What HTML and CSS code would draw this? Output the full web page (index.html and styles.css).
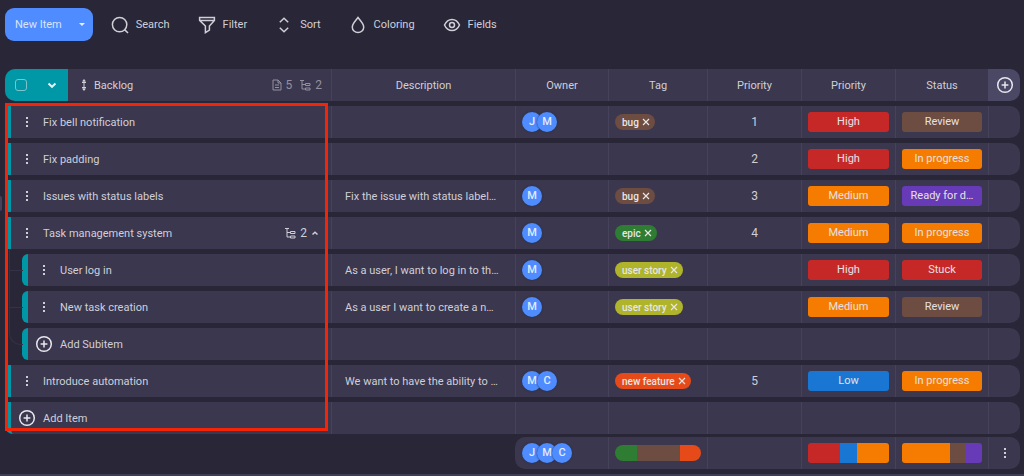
FILE: index.html
```html
<!DOCTYPE html>
<html lang="en">
<head>
<meta charset="utf-8">
<title>Backlog</title>
<link rel="stylesheet" href="styles.css">
</head>
<body>
<svg class="sprite" aria-hidden="true">
  <symbol id="search" viewBox="0 0 18 18"><circle cx="8.6" cy="8.6" r="7.2"/><path d="M13.6 13.6l3.4 3.4"/></symbol>
  <symbol id="filter" viewBox="0 0 18 18"><path d="M1.600 1.600h14.800v2.800l-5 5.600v4.200l-4 2.400V10L1.600 4.400zM2 4.400h14"/></symbol>
  <symbol id="sort" viewBox="0 0 18 18"><path d="M4.800 6.200L9 2.200l4.200 4M4.800 11.800L9 15.800l4.200-4"/></symbol>
  <symbol id="drop" viewBox="0 0 18 18"><path d="M9 1.500C7 4.500 3.300 7.600 3.300 11.200a5.700 5.300 0 0 0 11.400 0C14.700 7.600 11 4.500 9 1.500z"/></symbol>
  <symbol id="eye" viewBox="0 0 18 18"><path d="M1.500 9C3.200 5.200 6 3.400 9 3.400S14.800 5.200 16.500 9c-1.700 3.800-4.500 5.600-7.500 5.600S3.200 12.800 1.500 9z"/><circle cx="9" cy="9" r="2.500"/></symbol>
  <symbol id="plus" viewBox="0 0 18 18"><circle cx="9" cy="9" r="7.300"/><path d="M9 5.600v6.800M5.600 9h6.800"/></symbol>
  <symbol id="dots" viewBox="0 0 4 12"><path d="M1 1h2v2H1zM1 5h2v2H1zM1 9h2v2H1z"/></symbol>
  <symbol id="chev" viewBox="0 0 10 10"><path d="M1.500 3.500L5 6.800l3.500-3.300"/></symbol>
  <symbol id="chevup" viewBox="0 0 8 8"><path d="M1.500 5.500L4 3.200l2.500 2.300"/></symbol>
  <symbol id="doc" viewBox="0 0 10 12"><path d="M1 1h5l3 3v7H1zM6 1v3h3M3 6h4M3 8.500h4"/></symbol>
  <symbol id="tree" viewBox="0 0 11 12"><path d="M0 1.500h4M2 1.500v8.500h3M2 5.500h3"/><path d="M5.500 4.500h4.500v2H5.500zM5.500 9h4.500v2H5.500z"/></symbol>
  <symbol id="move" viewBox="0 0 6 12"><path d="M3 1v10M1 3.500h4M1 8.500h4"/><path d="M3 0L1 2.500h4zM3 12L1 9.500h4z" fill="currentColor" stroke="none"/></symbol>
  <symbol id="x" viewBox="0 0 8 8"><path d="M1 1l6 6M7 1L1 7"/></symbol>
</svg>

<nav class="toolbar" aria-label="Board tools">
  <button class="new-item">New Item<span class="caret"></span></button>
  <div class="tools">
    <button class="tool"><svg><use href="#search"/></svg>Search</button>
    <button class="tool"><svg><use href="#filter"/></svg>Filter</button>
    <button class="tool"><svg><use href="#sort"/></svg>Sort</button>
    <button class="tool"><svg><use href="#drop"/></svg>Coloring</button>
    <button class="tool"><svg><use href="#eye"/></svg>Fields</button>
  </div>
</nav>

<span class="side-handle"></span>

<main class="board">
  <table class="grid">
    <colgroup><col class="c-name"><col><col class="c-owner"><col class="c-tag"><col class="c-num"><col class="c-num"><col class="c-status"><col class="c-end"></colgroup>
    <thead>
      <tr>
        <th class="name">
          <div class="head">
            <div class="select"><input type="checkbox" aria-label="Select all items"><button aria-label="Selection menu"><svg class="chev"><use href="#chev"/></svg></button></div>
            <svg class="move"><use href="#move"/></svg><span class="grow">Backlog</span>
            <span class="count dim"><svg class="doc"><use href="#doc"/></svg>5</span>
            <span class="count dim"><svg class="tree"><use href="#tree"/></svg>2</span>
          </div>
        </th>
        <th>Description</th><th>Owner</th><th>Tag</th><th>Priority</th><th>Priority</th><th>Status</th>
        <th class="add-col"><button aria-label="Add field"><svg class="plus"><use href="#plus"/></svg></button></th>
      </tr>
    </thead>
    <tbody>
      <tr>
        <td class="name"><div class="item"><button class="menu" aria-label="Item menu"><svg><use href="#dots"/></svg></button><span class="grow">Fix bell notification</span></div></td>
        <td></td>
        <td><div class="people"><span class="avatar">J</span><span class="avatar">M</span></div></td>
        <td><span class="tag brown">bug<button aria-label="Remove bug"><svg><use href="#x"/></svg></button></span></td>
        <td class="num">1</td><td><div class="label red">High</div></td><td><div class="label brown">Review</div></td><td></td>
      </tr>
      <tr>
        <td class="name"><div class="item"><button class="menu" aria-label="Item menu"><svg><use href="#dots"/></svg></button><span class="grow">Fix padding</span></div></td>
        <td></td><td></td><td></td>
        <td class="num">2</td><td><div class="label red">High</div></td><td><div class="label orange">In progress</div></td><td></td>
      </tr>
      <tr>
        <td class="name"><div class="item"><button class="menu" aria-label="Item menu"><svg><use href="#dots"/></svg></button><span class="grow">Issues with status labels</span></div></td>
        <td class="desc">Fix the issue with status label…</td>
        <td><div class="people"><span class="avatar">M</span></div></td>
        <td><span class="tag brown">bug<button aria-label="Remove bug"><svg><use href="#x"/></svg></button></span></td>
        <td class="num">3</td><td><div class="label orange">Medium</div></td><td><div class="label purple">Ready for d…</div></td><td></td>
      </tr>
      <tr>
        <td class="name"><div class="item"><button class="menu" aria-label="Item menu"><svg><use href="#dots"/></svg></button><span class="grow">Task management system</span><span class="count"><svg class="tree"><use href="#tree"/></svg>2</span><button class="fold" aria-label="Collapse subitems"><svg><use href="#chevup"/></svg></button></div></td>
        <td></td>
        <td><div class="people"><span class="avatar">M</span></div></td>
        <td><span class="tag green">epic<button aria-label="Remove epic"><svg><use href="#x"/></svg></button></span></td>
        <td class="num">4</td><td><div class="label orange">Medium</div></td><td><div class="label orange">In progress</div></td><td></td>
      </tr>
      <tr>
        <td class="name"><div class="item sub"><button class="menu" aria-label="Item menu"><svg><use href="#dots"/></svg></button><span class="grow">User log in</span></div></td>
        <td class="desc">As a user, I want to log in to th…</td>
        <td><div class="people"><span class="avatar">M</span></div></td>
        <td><span class="tag lime">user story<button aria-label="Remove user story"><svg><use href="#x"/></svg></button></span></td>
        <td></td><td><div class="label red">High</div></td><td><div class="label red">Stuck</div></td><td></td>
      </tr>
      <tr>
        <td class="name"><div class="item sub"><button class="menu" aria-label="Item menu"><svg><use href="#dots"/></svg></button><span class="grow">New task creation</span></div></td>
        <td class="desc">As a user I want to create a n…</td>
        <td><div class="people"><span class="avatar">M</span></div></td>
        <td><span class="tag lime">user story<button aria-label="Remove user story"><svg><use href="#x"/></svg></button></span></td>
        <td></td><td><div class="label orange">Medium</div></td><td><div class="label brown">Review</div></td><td></td>
      </tr>
      <tr>
        <td class="name"><div class="item sub last"><button class="add"><svg class="plus"><use href="#plus"/></svg>Add Subitem</button></div></td>
        <td></td><td></td><td></td><td></td><td></td><td></td><td></td>
      </tr>
      <tr>
        <td class="name"><div class="item"><button class="menu" aria-label="Item menu"><svg><use href="#dots"/></svg></button><span class="grow">Introduce automation</span></div></td>
        <td class="desc">We want to have the ability to …</td>
        <td><div class="people"><span class="avatar">M</span><span class="avatar">C</span></div></td>
        <td><span class="tag deep">new feature<button aria-label="Remove new feature"><svg><use href="#x"/></svg></button></span></td>
        <td class="num">5</td><td><div class="label blue">Low</div></td><td><div class="label orange">In progress</div></td><td></td>
      </tr>
      <tr>
        <td class="name"><div class="item end"><button class="add"><svg class="plus"><use href="#plus"/></svg>Add Item</button></div></td>
        <td></td><td></td><td></td><td></td><td></td><td></td><td></td>
      </tr>
    </tbody>
  </table>

  <table class="grid summary">
    <colgroup><col class="c-name"><col><col class="c-owner"><col class="c-tag"><col class="c-num"><col class="c-num"><col class="c-status"><col class="c-end"></colgroup>
    <tbody>
      <tr>
        <td class="blank"></td><td class="blank"></td>
        <td class="first"><div class="people"><span class="avatar">J</span><span class="avatar">M</span><span class="avatar">C</span></div></td>
        <td><div class="bar pill"><i class="green"></i><i class="brown two"></i><i class="deep"></i></div></td>
        <td></td>
        <td><div class="bar"><i class="red two"></i><i class="blue"></i><i class="orange two"></i></div></td>
        <td><div class="bar"><i class="orange three"></i><i class="brown"></i><i class="purple"></i></div></td>
        <td class="more"><button class="menu" aria-label="Summary menu"><svg><use href="#dots"/></svg></button></td>
      </tr>
    </tbody>
  </table>
  <div class="highlight"></div>
</main>
<div class="scroll-track"></div>
</body>
</html>
```

FILE: styles.css
```css
* { box-sizing: border-box; }

html { overflow: hidden; }

body {
  margin: 0;
  background: #282637;
  color: #d0cfd8;
  font: 11px/17px Roboto, "Liberation Sans", sans-serif;
}

.sprite { position: absolute; width: 0; height: 0; }

svg { display: block; flex: none; fill: none; stroke: currentColor; stroke-width: 1.5; }

button {
  display: flex;
  align-items: center;
  padding: 0;
  border: 0;
  background: none;
  color: inherit;
  font: inherit;
}

.toolbar { display: flex; align-items: center; gap: 18px; padding: 8px 5px 0; }

.new-item {
  height: 33px;
  padding: 0 8px 0 10px;
  gap: 17px;
  border-radius: 9px;
  background: #4f8cff;
  color: #d9e4fa;
}

.caret { border: 3px solid transparent; border-top-color: #e6edfb; border-bottom: 0; }

.tools { display: flex; gap: 28px; }
.tool { gap: 7px; }
.tool svg { width: 18px; height: 18px; }

.side-handle {
  position: absolute;
  left: 0;
  top: 196px;
  width: 2px;
  height: 15px;
  border-radius: 0 3px 3px 0;
  background: #45425b;
}

.board { position: relative; padding: 23px 4px 0 5px; }

.grid { width: 100%; table-layout: fixed; border-collapse: separate; border-spacing: 0 5px; }
.c-name { width: 326px; }
.c-owner { width: 93px; }
.c-tag { width: 99px; }
.c-num { width: 94px; }
.c-status { width: 93px; }
.c-end { width: 32px; }

th, td {
  height: 32px;
  padding: 0 6px;
  border-left: 1px solid #454259;
  background: #3a374e;
  font-weight: 400;
  white-space: nowrap;
}

th.name, td.name { padding: 0; border-left: 0; background: none; }
th:last-child, td:last-child { border-radius: 0 10px 10px 0; }

.head, .item { display: flex; align-items: center; height: 32px; background: #3a374e; }
.grow { flex: 1; text-align: left; }

.head { padding-right: 9px; border-radius: 10px 0 0 10px; }

.select {
  display: flex;
  align-items: center;
  justify-content: space-between;
  width: 63px;
  height: 32px;
  margin-right: 13px;
  padding: 0 11px 0 10px;
  border-radius: 10px 0 0 10px;
  background: #0097a7;
  color: #e3f1f4;
}

.select input {
  appearance: none;
  width: 12px;
  height: 12px;
  margin: 0;
  border: 1px solid #7cc3cc;
  border-radius: 3px;
}

.chev { width: 10px; height: 10px; stroke-width: 2; }
.move { width: 6px; height: 12px; margin-right: 7px; stroke-width: 1; }

.count { display: flex; align-items: center; gap: 4px; font-size: 12px; }
.count svg { stroke-width: 1; }
.dim { margin-left: 8px; color: #9391a1; }
.doc { width: 10px; height: 12px; }
.tree { width: 11px; height: 12px; }

.add-col { padding: 0 7px; background: #4b4865; border-left-color: #4b4865; }
.plus { width: 18px; height: 18px; color: #e8e7ee; }

.item { padding-right: 12px; border-left: 6px solid #0097a7; }
.item.end { border-bottom-left-radius: 8px; }

.item.sub {
  position: relative;
  margin-left: 17px;
  border-radius: 6px 0 0 6px;
}

/* Branch line from the parent item to each subitem */
.item.sub::before {
  content: "";
  position: absolute;
  left: -19px;
  top: -5px;
  width: 13px;
  height: 21px;
  border: solid #353247;
  border-width: 0 0 1px 1px;
}
.item.sub:not(.last)::after {
  content: "";
  position: absolute;
  left: -19px;
  top: 16px;
  height: 16px;
  border-left: 1px solid #353247;
}
.item.last::before { border-bottom-left-radius: 12px; }

.menu { width: 4px; margin: 0 14px; }
.menu svg { width: 4px; height: 12px; fill: currentColor; stroke: none; }
.fold { margin-left: 4px; }
.fold svg { width: 8px; height: 8px; }
.add { gap: 7px; margin-left: 7px; }

.desc { padding: 0 12px 0 13px; overflow: hidden; text-overflow: ellipsis; }
.num { font-size: 12px; text-align: center; }

.people { display: flex; }
.avatar {
  width: 20px;
  height: 20px;
  border-radius: 50%;
  background: #4f8cff;
  color: #e3ebfa;
  font-weight: 500;
  line-height: 20px;
  text-align: center;
  box-shadow: 0 0 2px #22304f;
}
.avatar + .avatar { margin-left: -5px; }

.tag {
  display: flex;
  align-items: center;
  gap: 3px;
  width: max-content;
  height: 16px;
  padding: 0 5px 0 7px;
  border-radius: 8px;
  color: #e8e6e6;
  font-size: 10px;
  font-weight: 500;
}
.tag svg { width: 8px; height: 8px; stroke-width: 1.2; }

.label {
  height: 20px;
  border-radius: 3px;
  color: #e6e1e3;
  line-height: 20px;
  text-align: center;
}

.red { background: #c62828; }
.brown { background: #6d4c41; }
.orange { background: #f57c00; }
.purple { background: #673ab7; }
.green { background: #2e7d32; }
.lime { background: #afb42b; }
.deep { background: #e64a19; }
.blue { background: #1976d2; }

.summary { margin-top: -2px; border-spacing: 0; }
.summary .blank { border-left-color: transparent; background: none; }
.summary .first { border-left-color: #3a374e; border-radius: 10px 0 0 10px; }
.summary .more { padding: 0; }

.bar { display: flex; height: 20px; border-radius: 3px; overflow: hidden; }
.bar i { flex: 1; }
.bar .two { flex: 2; }
.bar .three { flex: 3; }
.bar.pill { height: 16px; border-radius: 8px; }

.highlight {
  position: absolute;
  left: 5px;
  top: 62px;
  width: 323px;
  bottom: 38px;
  border: 3px solid #f42408;
  pointer-events: none;
}

.scroll-track { height: 8px; margin-top: 5px; background: #3f3c56; }
```
